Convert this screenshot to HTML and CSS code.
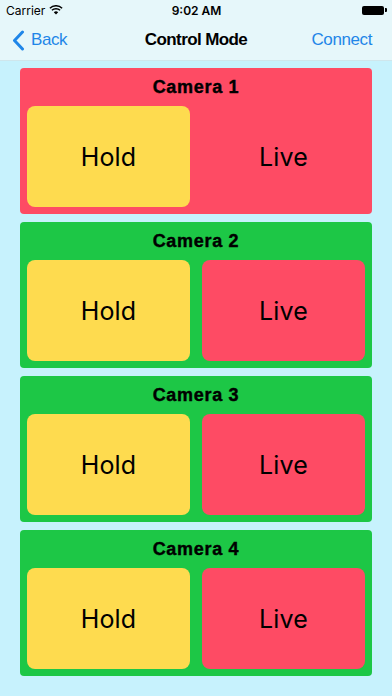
FILE: index.html
```html
<!DOCTYPE html>
<html>
<head>
<meta charset="utf-8">
<link rel="stylesheet" href="styles.css">
</head>
<body>
<div class="app">
  <header class="top">
    <div class="status">
      <div class="carrier">Carrier
        <svg class="wifi" width="14" height="10" viewBox="0 0 14 10"><path d="M7 9.6 L9.2 7.2 A3.2 3.2 0 0 0 4.8 7.2 Z" fill="#000"/><path d="M2.9 5.3 A5.9 5.9 0 0 1 11.1 5.3" stroke="#000" stroke-width="1.5" fill="none"/><path d="M0.9 3.2 A8.8 8.8 0 0 1 13.1 3.2" stroke="#000" stroke-width="1.5" fill="none"/></svg>
      </div>
      <div class="time">9:02 AM</div>
      <div class="battery"><span class="batt-body"></span><span class="batt-tip"></span></div>
    </div>
    <nav class="navbar">
      <div class="back">
        <svg width="13" height="21" viewBox="0 0 13 21"><path d="M10.5 2 L2.5 10.5 L10.5 19" stroke="#1f86e8" stroke-width="3" fill="none" stroke-linecap="round" stroke-linejoin="round"/></svg>
        <span>Back</span>
      </div>
      <div class="title">Control Mode</div>
      <div class="connect">Connect</div>
    </nav>
  </header>
  <main class="list">
    <section class="card red">
      <h2>Camera 1</h2>
      <div class="btns"><div class="btn yellow">Hold</div><div class="btn plain">Live</div></div>
    </section>
    <section class="card green">
      <h2>Camera 2</h2>
      <div class="btns"><div class="btn yellow">Hold</div><div class="btn redbtn">Live</div></div>
    </section>
    <section class="card green">
      <h2>Camera 3</h2>
      <div class="btns"><div class="btn yellow">Hold</div><div class="btn redbtn">Live</div></div>
    </section>
    <section class="card green">
      <h2>Camera 4</h2>
      <div class="btns"><div class="btn yellow">Hold</div><div class="btn redbtn">Live</div></div>
    </section>
  </main>
</div>
</body>
</html>
```
FILE: styles.css
```css
* { box-sizing: border-box; }
html, body { margin: 0; padding: 0; }
body {
  width: 392px;
  height: 696px;
  background: #c7f2fd;
  font-family: Inter, "Liberation Sans", sans-serif;
  color: #000;
  overflow: hidden;
}
.app { display: flex; flex-direction: column; }
.top {
  background: #e6f7fa;
  border-bottom: 1px solid #cfe6ec;
  height: 61px;
}
.status {
  height: 20px;
  display: flex;
  align-items: center;
  justify-content: space-between;
  padding: 0 5px 0 6px;
  font-size: 12px;
}
.carrier { display: flex; align-items: center; gap: 4px; width: 80px; }
.wifi { margin-top: -1px; }
.time { font-weight: 600; }
.battery { width: 80px; display: flex; justify-content: flex-end; align-items: center; }
.batt-body { width: 22px; height: 9px; background: #000; border-radius: 2px; }
.batt-tip { width: 2px; height: 4px; background: #000; border-radius: 0 1px 1px 0; margin-left: 1px; }
.navbar {
  height: 40px;
  display: flex;
  align-items: center;
  justify-content: space-between;
  padding: 0 20px 0 12px;
  font-family: "Liberation Sans", Arial, sans-serif;
  font-size: 17px;
  letter-spacing: -0.4px;
  position: relative;
}
.back { display: flex; align-items: center; gap: 6px; color: #1f86e8; }
.title {
  position: absolute;
  left: 0; right: 0;
  text-align: center;
  font-weight: 700;
  letter-spacing: -0.6px;
  pointer-events: none;
}
.connect { color: #1f86e8; }
.list {
  display: flex;
  flex-direction: column;
  gap: 8px;
  padding: 7px 20px 0 20px;
}
.card {
  height: 146px;
  border-radius: 4px;
  padding: 0 7px 7px 7px;
  display: flex;
  flex-direction: column;
}
.card h2 {
  margin: 0;
  height: 38px;
  display: flex;
  align-items: center;
  justify-content: center;
  font-family: "Liberation Sans", Arial, sans-serif;
  font-size: 18px;
  font-weight: 700;
  letter-spacing: 0.7px;
  -webkit-text-stroke: 0.4px #000;
  padding-top: 1px;
}
.red { background: #fe4b64; }
.green { background: #1dc746; }
.btns {
  flex: 1;
  display: flex;
  gap: 12px;
}
.btn {
  flex: 1;
  border-radius: 8px;
  display: flex;
  align-items: center;
  justify-content: center;
  font-size: 25px;
  letter-spacing: 0.2px;
}
.yellow { background: #fedb4f; }
.redbtn { background: #fe4b64; }
.plain { background: transparent; }
```
